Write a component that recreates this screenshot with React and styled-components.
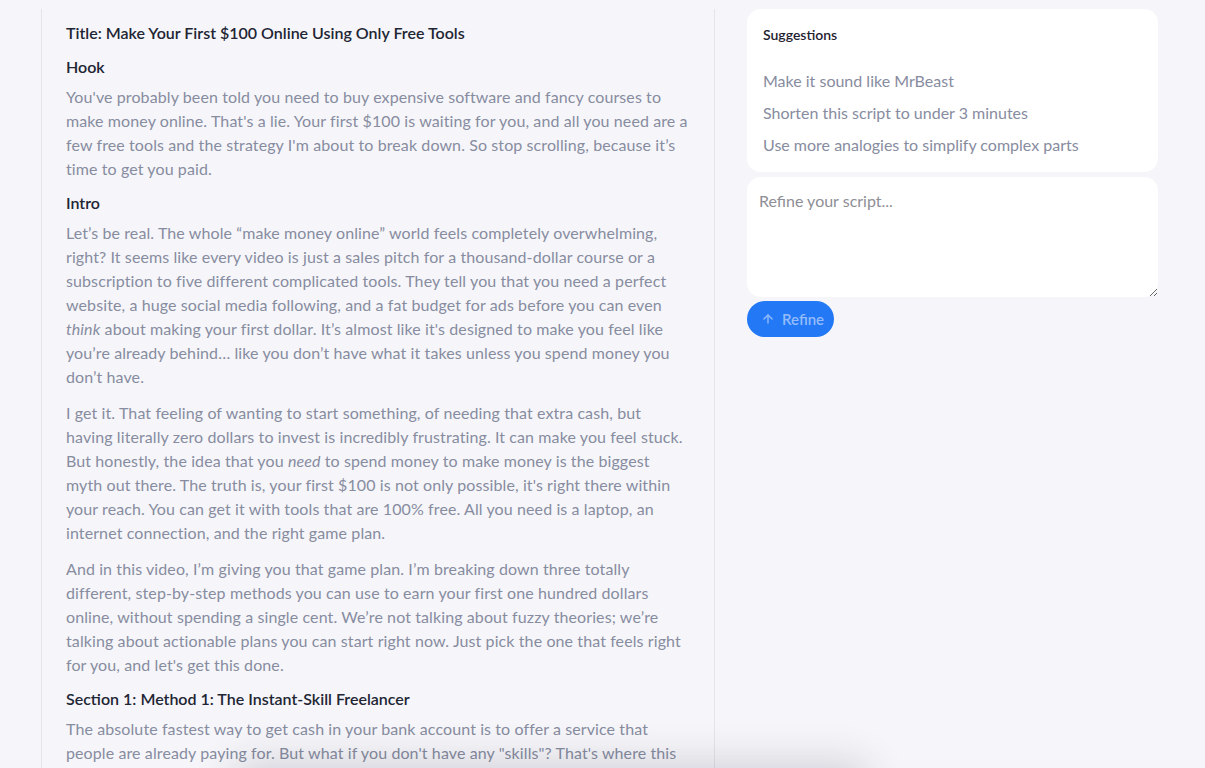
import React from 'react';
import styled, {createGlobalStyle} from 'styled-components';

const GlobalStyle = createGlobalStyle`
  html, body {
    margin: 0;
    padding: 0;
    background: #f6f6fa;
    font-family: "Lato", "Noto Sans", sans-serif;
    overflow: hidden;
  }
  * {
    box-sizing: border-box;
  }
`;

const suggestions = [
    'Make it sound like MrBeast',
    'Shorten this script to under 3 minutes',
    'Use more analogies to simplify complex parts',
];

const App = () => {
    return (
        <>
            <GlobalStyle/>
            <Page>
                <ScriptPanel>
                    <Title>Title: Make Your First $100 Online Using Only Free Tools</Title>
                    <Heading>Hook</Heading>
                    <Para>
                        You've probably been told you need to buy expensive software and fancy courses to
                        make money online. That's a lie. Your first $100 is waiting for you, and all you need are a
                        few free tools and the strategy I'm about to break down. So stop scrolling, because it’s
                        time to get you paid.
                    </Para>
                    <Heading>Intro</Heading>
                    <Para>
                        Let’s be real. The whole “make money online” world feels completely overwhelming,
                        right? It seems like every video is just a sales pitch for a thousand-dollar course or a
                        subscription to five different complicated tools. They tell you that you need a perfect
                        website, a huge social media following, and a fat budget for ads before you can even{' '}
                        <em>think</em> about making your first dollar. It’s almost like it's designed to make you feel like
                        you’re already behind… like you don’t have what it takes unless you spend money you
                        don’t have.
                    </Para>
                    <Para>
                        I get it. That feeling of wanting to start something, of needing that extra cash, but
                        having literally zero dollars to invest is incredibly frustrating. It can make you feel stuck.
                        But honestly, the idea that you <em>need</em> to spend money to make money is the biggest
                        myth out there. The truth is, your first $100 is not only possible, it's right there within
                        your reach. You can get it with tools that are 100% free. All you need is a laptop, an
                        internet connection, and the right game plan.
                    </Para>
                    <Para>
                        And in this video, I’m giving you that game plan. I’m breaking down three totally
                        different, step-by-step methods you can use to earn your first one hundred dollars
                        online, without spending a single cent. We’re not talking about fuzzy theories; we’re
                        talking about actionable plans you can start right now. Just pick the one that feels right
                        for you, and let's get this done.
                    </Para>
                    <Heading>Section 1: Method 1: The Instant-Skill Freelancer</Heading>
                    <Para>
                        The absolute fastest way to get cash in your bank account is to offer a service that
                        people are already paying for. But what if you don't have any "skills"? That's where this
                        method comes in.
                    </Para>
                </ScriptPanel>

                <SidePanel>
                    <Card>
                        <CardTitle>Suggestions</CardTitle>
                        <SuggestionList>
                            {suggestions.map((s) => (
                                <Suggestion key={s}>{s}</Suggestion>
                            ))}
                        </SuggestionList>
                    </Card>
                    <RefineInput placeholder="Refine your script..."/>
                    <RefineButton type="button">
                        <svg width="14" height="14" viewBox="0 0 24 24" fill="none" stroke="currentColor"
                             strokeWidth="2.4" strokeLinecap="round" strokeLinejoin="round">
                            <path d="M12 19V5"/>
                            <path d="M5 12l7-7 7 7"/>
                        </svg>
                        Refine
                    </RefineButton>
                </SidePanel>
            </Page>
            <FloatingShadow/>
        </>
    );
};

export default App;

const Page = styled.div`
  display: flex;
  align-items: flex-start;
  gap: 32px;
  padding: 9px 47px 0 41px;
  height: 768px;
`;

const ScriptPanel = styled.div`
  width: 674px;
  flex-shrink: 0;
  min-height: 780px;
  padding: 12px 25px 0 24px;
  border-left: 1px solid #e4e4ea;
  border-right: 1px solid #e4e4ea;
  display: flex;
  flex-direction: column;
`;

const Title = styled.h2`
  margin: 0 0 10px;
  font-size: 16px;
  line-height: 24px;
  font-weight: 600;
  color: #222533;
`;

const Heading = styled.h3`
  margin: 0 0 6px;
  font-size: 16px;
  line-height: 24px;
  font-weight: 600;
  color: #222533;
`;

const Para = styled.p`
  margin: 0 0 12px;
  font-size: 16px;
  line-height: 24px;
  letter-spacing: 0.1px;
  color: #878ca0;
  & + h3 {
    margin-top: -2px;
  }
  em {
    font-style: italic;
  }
`;

const SidePanel = styled.div`
  flex: 1;
  display: flex;
  flex-direction: column;
  align-items: flex-start;
  gap: 5px;
`;

const Card = styled.div`
  width: 100%;
  background: #ffffff;
  border-radius: 14px;
  padding: 18px 16px 11px;
`;

const CardTitle = styled.div`
  font-size: 14px;
  line-height: 16px;
  font-weight: 600;
  color: #1f2230;
  margin-bottom: 22px;
`;

const SuggestionList = styled.div`
  display: flex;
  flex-direction: column;
`;

const Suggestion = styled.div`
  font-size: 16px;
  line-height: 32px;
  color: #878ca0;
  cursor: pointer;
`;

const RefineInput = styled.textarea`
  width: 100%;
  height: 120px;
  border: none;
  border-radius: 14px;
  background: #ffffff;
  padding: 14px 12px;
  font-family: inherit;
  font-size: 16px;
  line-height: 20px;
  color: #1f2230;
  outline: none;
  resize: vertical;
  &::placeholder {
    color: #8e8e96;
  }
`;

const RefineButton = styled.button`
  display: flex;
  align-items: center;
  gap: 7px;
  height: 36px;
  padding: 0 10px 0 14px;
  border: none;
  border-radius: 18px;
  background: #2378f6;
  color: #93bcf9;
  font-family: inherit;
  font-size: 15px;
  font-weight: 600;
  margin-top: -1px;
`;

const FloatingShadow = styled.div`
  position: fixed;
  left: 230px;
  bottom: -60px;
  width: 640px;
  height: 60px;
  border-radius: 20px;
  box-shadow: 0 -6px 40px rgba(20, 20, 40, 0.16);
`;
